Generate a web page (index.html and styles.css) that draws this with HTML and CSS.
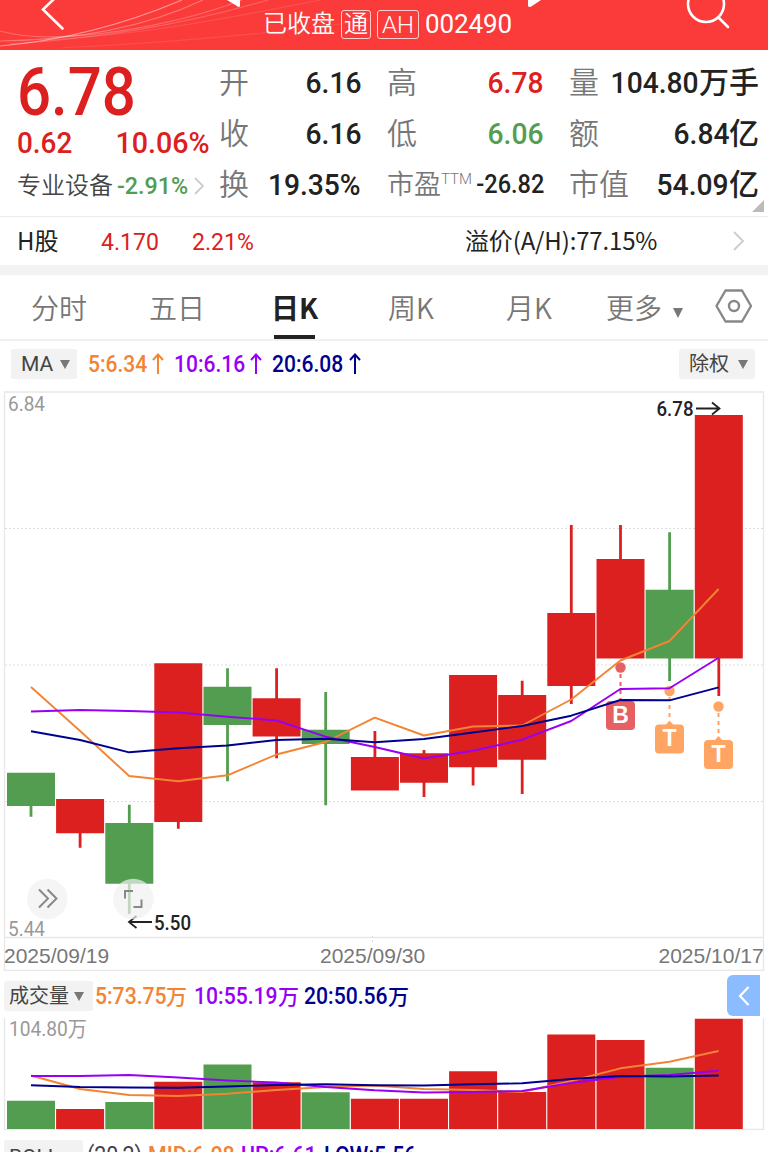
FILE: index.html
```html
<!DOCTYPE html>
<html lang="zh-CN">
<head>
    <meta charset="UTF-8">
    <meta name="viewport" content="width=device-width, initial-scale=1.0">
    <title>002490</title>
    <link rel="stylesheet" href="styles.css">
</head>
<body>
    <header class="header">
        <svg class="header-lines" width="768" height="50" viewBox="0 0 768 50">
            <path d="M0 46 C70 40 130 22 182 0" opacity=".45"/>
            <path d="M0 41 C80 40 150 25 203 0" opacity=".3"/>
            <path d="M0 31 C60 48 180 24 242 0" opacity=".25"/>
            <path d="M10 44 C110 38 200 20 268 0" opacity=".2"/>
            <path d="M40 40 C140 36 240 16 320 0" opacity=".12"/>
            <path d="M60 48 C180 42 270 34 370 20" opacity=".1"/>
        </svg>
        <svg class="header-icons" width="768" height="50" viewBox="0 0 768 50">
            <path class="stroke" d="M54 -1 L43 9.5 L62.500 28.500"/>
            <path class="solid" d="M227 0 H240 V6 Q239 8 237 6 Z M528 0 H541 L532 6 Q529 8 528 6 Z"/>
            <circle class="stroke" cx="706" cy="4" r="18"/>
            <path class="stroke" d="M718.500 17.500 L728 27"/>
        </svg>
        <div class="header-title">
            <span>已收盘</span>
            <span class="tag">通</span>
            <span class="tag">AH</span>
            <span class="code">002490</span>
        </div>
    </header>

    <section class="quote">
        <div class="quote-main">
            <div class="price"><span class="num left">6.78</span></div>
            <div class="change"><span class="num left">0.62</span><span class="num right">10.06%</span></div>
            <div class="sector">
                <span>专业设备</span><span class="num left pct">-2.91%</span>
                <svg width="10" height="18" viewBox="0 0 10 18"><path d="M1 1 L9 9 L1 17"/></svg>
            </div>
        </div>
        <div class="quote-grid">
            <div class="cell"><label>开</label><b><span class="num right">6.16</span></b></div>
            <div class="cell"><label>高</label><b class="up"><span class="num right">6.78</span></b></div>
            <div class="cell"><label>量</label><b><span class="num right">104.80</span>万手</b></div>
            <div class="cell"><label>收</label><b><span class="num right">6.16</span></b></div>
            <div class="cell"><label>低</label><b class="down"><span class="num right">6.06</span></b></div>
            <div class="cell"><label>额</label><b><span class="num right">6.84</span>亿</b></div>
            <div class="cell"><label>换</label><b><span class="num right">19.35%</span></b></div>
            <div class="cell small"><label>市盈<sup>TTM</sup></label><b><span class="num right">-26.82</span></b></div>
            <div class="cell"><label>市值</label><b><span class="num right">54.09</span>亿</b></div>
        </div>
        <span class="corner"></span>
    </section>

    <section class="hstock">
        <span class="hs-name">H股</span>
        <span class="hs-price"><span class="num left">4.170</span></span>
        <span class="hs-pct"><span class="num left">2.21%</span></span>
        <span class="hs-ratio">溢价(A/H):77.15%</span>
        <svg width="12" height="20" viewBox="0 0 12 20"><path d="M1 1 L10 10 L1 19"/></svg>
    </section>

    <nav class="tabs">
        <span class="tab">分时</span>
        <span class="tab">五日</span>
        <span class="tab active">日K</span>
        <span class="tab">周K</span>
        <span class="tab month">月K</span>
        <span class="tab more">更多<i class="arrow"></i></span>
        <svg class="gear" width="40" height="36" viewBox="0 0 40 36">
            <path d="M11.500 2.500 H28 L37 18 L28 33.500 H11.500 L2.500 18 Z"/>
            <circle cx="20" cy="18" r="5"/>
        </svg>
    </nav>

    <section class="legend">
        <span class="chip chip-ma">MA<i class="arrow"></i></span>
        <span class="ma5 w78"><span class="num left">5:6.34</span><svg class="up-arrow" width="12" height="22" viewBox="0 0 12 22"><path d="M6 21 V2 M1 7 L6 1.500 L11 7"/></svg></span>
        <span class="ma10 w88"><span class="num left">10:6.16</span><svg class="up-arrow" width="12" height="22" viewBox="0 0 12 22"><path d="M6 21 V2 M1 7 L6 1.500 L11 7"/></svg></span>
        <span class="ma20 w89"><span class="num left">20:6.08</span><svg class="up-arrow" width="12" height="22" viewBox="0 0 12 22"><path d="M6 21 V2 M1 7 L6 1.500 L11 7"/></svg></span>
        <span class="chip chip-right">除权<i class="arrow"></i></span>
    </section>

    <!-- K线图 -->
    <svg class="chart" width="768" height="580" viewBox="0 391 768 580">
        <g class="frame">
            <path d="M4.500 970.500 V392 H763.500 V970.500 Z"/>
            <path d="M4 937.500 H764"/>
        </g>
        <path class="grid" d="M5 528.500 H763 M5 665 H763 M5 801.500 H763 M372.500 936 V943"/>
        <g class="green">
            <path d="M7 772.700h48v33.300h-48z M29.600 806h2.800v10.700h-2.800z"/>
            <path d="M105.300 823h48v60.700h-48z M127.900 804.700h2.800v109.300h-2.800z"/>
            <path d="M203.500 686.700h48v38.300h-48z M226.100 668.300h2.800v113h-2.800z"/>
            <path d="M301.700 729.700h48v14.300h-48z M324.300 692h2.800v113.300h-2.800z"/>
            <path d="M645.600 589.700h48v68.800h-48z M668.200 532.300h2.800v148.700h-2.800z"/>
        </g>
        <g class="red">
            <path d="M56.100 799h48v34.300h-48z M78.700 833h2.800v14.700h-2.800z"/>
            <path d="M154.300 663.300h48v158.700h-48z M176.900 821h2.800v7.700h-2.800z"/>
            <path d="M252.600 698.300h48v38.200h-48z M275.200 668.300h2.800v90h-2.800z"/>
            <path d="M350.900 757h48v33.500h-48z M373.500 731h2.800v27h-2.800z"/>
            <path d="M400 753.300h48v29.500h-48z M422.600 750h2.800v47h-2.800z"/>
            <path d="M449.100 675h48v92.200h-48z M471.700 767h2.800v18.500h-2.800z"/>
            <path d="M498.200 695h48v64.700h-48z M520.800 680.700h2.800v113.300h-2.800z"/>
            <path d="M547.300 613h48v73h-48z M569.900 525h2.800v179h-2.800z"/>
            <path d="M596.500 559h48v99.600h-48z M619.100 525h2.800v35h-2.800z"/>
            <path d="M694.800 415h48v243.600h-48z M717.400 658h2.800v38h-2.800z"/>
        </g>

        <!-- 买卖点 -->
        <g class="mark-b">
            <circle cx="620.500" cy="667.500" r="5.200"/>
            <path d="M620.500 674 V701"/>
            <rect x="606" y="701" width="29" height="29" rx="4"/>
            <text x="620.500" y="722.500">B</text>
        </g>
        <g class="mark-t">
            <circle cx="669.500" cy="691" r="5.200"/>
            <path d="M669.500 697 V721"/>
            <path class="tip" d="M665.500 725 L669.500 720.500 L673.500 725 Z"/>
            <rect x="655" y="724.500" width="29" height="29" rx="4"/>
            <text x="669.500" y="746">T</text>
        </g>
        <g class="mark-t">
            <circle cx="718.500" cy="706.500" r="5.200"/>
            <path d="M718.500 713 V736"/>
            <path class="tip" d="M714.500 740.500 L718.500 736 L722.500 740.500 Z"/>
            <rect x="704" y="740" width="29" height="29" rx="4"/>
            <text x="718.500" y="761.500">T</text>
        </g>

        <polyline class="line5" points="31,687 80.100,731 129.200,776 178.300,781.300 227.400,775.300 276.500,754.500 325.600,742 374.800,717.700 423.900,735.500 473,726.500 522.100,725.500 571.200,699.500 620.400,660.500 669.500,641 718.600,589"/>
        <polyline class="line10" points="31,711.500 80.100,710 129.200,711 178.300,712.500 227.400,716.700 276.500,720.500 325.600,736.700 374.800,747 423.900,758.500 473,750.700 522.100,739.700 571.200,721 620.400,689 669.500,688.300 718.600,657.700"/>
        <polyline class="line20" points="31,731.300 80.100,740 129.200,752.300 178.300,748.300 227.400,745.500 276.500,740 325.600,738.700 374.800,742.300 423.900,739 473,732.500 522.100,726 571.200,715.700 620.400,700 669.500,700.300 718.600,687.300"/>

        <g class="axis">
            <text x="8" y="410.500" textLength="37" lengthAdjust="spacingAndGlyphs">6.84</text>
            <text x="8" y="936" textLength="37" lengthAdjust="spacingAndGlyphs">5.44</text>
        </g>
        <g class="tip-text">
            <text x="656.500" y="416" textLength="37" lengthAdjust="spacingAndGlyphs">6.78</text>
            <path d="M696 408.500 H719 M712 402.500 L719.500 408.500 L712 414.500"/>
            <text x="154" y="929.500" textLength="37" lengthAdjust="spacingAndGlyphs">5.50</text>
            <path d="M152 922 H129 M136.500 916 L129 922 L136.500 928"/>
        </g>
        <g class="date">
            <text x="4" y="963">2025/09/19</text>
            <text x="320" y="963">2025/09/30</text>
            <text x="658.500" y="963">2025/10/17</text>
        </g>

        <g class="tool">
            <circle cx="47.300" cy="899" r="20.300"/>
            <path d="M39 889.500 L48 898.500 L39 907.500 M47.500 889.500 L56.500 898.500 L47.500 907.500"/>
            <circle cx="133.300" cy="899" r="20.300"/>
            <path d="M125 898.500 V891 H133 M141.500 899.500 V907 H133.500"/>
        </g>
    </svg>

    <section class="vol-legend">
        <span class="chip chip-vol">成交量<i class="arrow"></i></span>
        <span class="ma5 v5"><span class="num left">5:73.75</span>万</span>
        <span class="ma10 v10"><span class="num left">10:55.19</span>万</span>
        <span class="ma20 v20"><span class="num left">20:50.56</span>万</span>
        <span class="fold"><svg width="12" height="20" viewBox="0 0 12 20"><path d="M10.500 1 L2 10 L10.500 19"/></svg></span>
    </section>

    <!-- 成交量 -->
    <svg class="chart" width="768" height="113" viewBox="0 1017 768 113">
        <path class="frame" d="M4.500 1018 V1129.500 H763.500 V1018"/>
        <g class="green">
            <path d="M7 1100.800h48v28.200h-48z M105.300 1102h48v27h-48z M203.500 1064.500h48v64.500h-48z M301.700 1092.300h48v36.700h-48z M645.600 1067.800h48v61.200h-48z"/>
        </g>
        <g class="red">
            <path d="M56.100 1109h48v20h-48z M154.300 1081.700h48v47.300h-48z M252.600 1082.300h48v46.700h-48z M350.900 1098.700h48v30.300h-48z M400 1098.700h48v30.300h-48z"/>
            <path d="M449.100 1071.300h48v57.700h-48z M498.200 1092h48v37h-48z M547.300 1034.500h48v94.500h-48z M596.500 1040h48v89h-48z M694.800 1018.800h48v110.200h-48z"/>
        </g>
        <polyline class="line5" points="31,1075.500 80.100,1089 129.200,1095 178.300,1096 227.400,1093.700 276.500,1090 325.600,1087 374.800,1085.500 423.900,1089 473,1090 522.100,1092 571.200,1081 620.400,1068.300 669.500,1061.700 718.600,1051"/>
        <polyline class="line10" points="31,1076 80.100,1076 129.200,1075 178.300,1077.500 227.400,1080.500 276.500,1082.500 325.600,1087 374.800,1090.300 423.900,1092.500 473,1092 522.100,1091 571.200,1083 620.400,1076.700 669.500,1075 718.600,1070.700"/>
        <polyline class="line20" points="31,1085.300 80.100,1087 129.200,1087.500 178.300,1087.700 227.400,1086.500 276.500,1085 325.600,1084.300 374.800,1085.300 423.900,1085.500 473,1084.300 522.100,1083.300 571.200,1079 620.400,1076 669.500,1076.500 718.600,1075.500"/>
        <g class="axis">
            <text x="9" y="1036" textLength="78" lengthAdjust="spacingAndGlyphs">104.80万</text>
        </g>
    </svg>

    <section class="boll">
        <span class="chip chip-boll">BOLL<i class="arrow"></i></span>
        <span class="param"><span class="num left">(20,2)</span></span>
        <span class="ma5 b1"><span class="num left">MID:6.08</span></span>
        <span class="ma10 b2"><span class="num left">UP:6.61</span></span>
        <span class="ma20 b3"><span class="num left">LOW:5.56</span></span>
    </section>
</body>
</html>
```

FILE: styles.css
```css
* { margin: 0; padding: 0; box-sizing: border-box; }
html, body { height: 1152px; overflow: hidden; }
body { width: 768px; background: #fff; color: #222; font-family: Roboto, "Noto Sans CJK SC", sans-serif; }
svg { display: block; flex: none; }
section, nav { white-space: nowrap; }

.num { display: inline-block; font-family: Roboto, sans-serif; }
.left { transform: scaleX(.93); transform-origin: left; }
.right { transform: scaleX(.94); transform-origin: right; }
.up { color: #dc2020; }
.down { color: #529d4f; }
.arrow { display: inline-block; border: 5.5px solid transparent; border-top: 10px solid #777; border-bottom: 0; }

.header { position: relative; height: 50px; background: #fb3a3a; color: #fff; overflow: hidden; }
.header-lines, .header-icons { position: absolute; left: 0; top: 0; }
.header-lines path { fill: none; stroke: #fff; stroke-width: 1.2; }
.stroke { fill: none; stroke: #fff; stroke-width: 2.6; stroke-linecap: round; }
.solid { fill: #fff; }
.header-title { position: relative; display: flex; align-items: center; gap: 6px; padding: 9px 0 0 263px; height: 39px; font-size: 24px; font-weight: 350; line-height: 26px; }
.tag { border: 1.5px solid rgba(255,255,255,.75); border-radius: 3px; height: 29px; line-height: 26px; padding: 0 2px; }
.tag + .tag { padding: 0 4px; line-height: 28px; font-weight: 300; }
.code { font-size: 26px; font-weight: 400; letter-spacing: -.1px; }

.quote { position: relative; display: flex; height: 167px; border-bottom: 1px solid #ebebeb; }
.quote-main { width: 219px; padding-left: 17px; color: #dc2020; }
.price { height: 69px; padding-top: 4px; line-height: 76px; font-size: 67px; font-weight: 500; }
.price .num { transform: scaleX(.895); line-height: 60px; }
.change { display: flex; justify-content: space-between; height: 48px; padding-right: 9px; line-height: 47px; font-size: 30px; font-weight: 500; }
.change .right { transform: scaleX(.955); }
.sector { display: flex; align-items: center; height: 37px; line-height: 34px; color: #444; font-size: 24px; font-weight: 350; }
.sector .pct { width: 84px; margin-right: -3px; color: #529d4f; font-weight: 500; padding-left: 4px; transform: scaleX(.97); }
.sector svg path, .hstock svg path { fill: none; stroke: #ccc; stroke-width: 1.8; }
.quote-grid { display: grid; grid-template-columns: 142px 156px 190px; grid-auto-rows: 51px; column-gap: 26px; padding-top: 7px; }
.cell { display: flex; justify-content: space-between; align-items: center; line-height: 50px; }
.cell label { font-size: 30px; font-weight: 350; color: #777; }
.cell b { font-size: 30px; font-weight: 500; }
.cell.small label { font-size: 27px; }
.cell.small b { font-size: 25px; }
.cell sup { display: inline-block; font-size: 15px; line-height: 1; vertical-align: 10px; }
.corner { position: absolute; right: 4px; bottom: 4px; border: 6px solid #bbb; border-left-color: transparent; border-top-color: transparent; }

.hstock { display: flex; align-items: center; height: 58px; border-bottom: 10px solid #f2f2f2; padding-left: 17px; font-size: 24px; line-height: 24px; font-family: "Noto Sans CJK SC", sans-serif; }
.hstock > span { height: 26px; }
.hs-name { width: 84px; }
.hs-price { width: 91px; color: #dc2020; }
.hs-price .num, .hs-pct .num { transform: scaleX(.96); }
.hs-pct { width: 273px; color: #dc2020; }
.hs-ratio { width: 268px; letter-spacing: -.15px; }

.tabs { display: flex; height: 66px; border-bottom: 2px solid #eff0f3; color: #777; font-size: 28px; font-weight: 350; line-height: 65px; padding-left: 31px; font-family: "Noto Sans CJK SC", sans-serif; }
.tab { width: 118px; }
.tab.active { width: 121px; padding-left: 4px; position: relative; color: #222; font-weight: 700; }
.tab.active::after { content: ""; position: absolute; left: 7px; bottom: 0; width: 41px; height: 4px; background: #222; }
.tab.month { width: 100px; }
.tab.more { width: 108px; }
.more .arrow { margin-left: 11px; vertical-align: 1px; }
.gear { margin-top: 13px; }
.gear path, .gear circle { fill: none; stroke: #888; stroke-width: 2.4; stroke-linejoin: round; }

.chip { display: flex; align-items: center; justify-content: space-between; height: 30px; background: #f2f2f2; border-radius: 3px; color: #444; font-size: 21px; font-weight: 400; }
.chip .arrow { border-width: 9px 5px 0; }
.legend, .vol-legend, .boll { display: flex; font-size: 23px; font-weight: 500; line-height: 32px; }
.legend { height: 50px; padding: 8px 13px 0 11px; }
.chip-ma { width: 66px; padding: 0 7px 0 10px; margin-right: 11px; }
.chip-right { width: 76px; padding: 0 7px 0 10px; margin-left: auto; font-size: 20px; }
.legend > span:not(.chip) { display: flex; justify-content: space-between; margin-right: 10px; }
.legend .num { width: 62px; transform: scaleX(.915); }
.w78 { width: 76px; }
.w88 { width: 88px; }
.w89 { width: 89px; }
.up-arrow { margin-top: 4px; fill: none; stroke: currentColor; stroke-width: 2; }
.ma5 { color: #f28434; }
.ma10 { color: #9800f5; }
.ma20 { color: #00008f; }

.frame, .frame path { fill: none; stroke: #e8e8e8; stroke-width: 1.4; }
.grid { fill: none; stroke: #ddd; stroke-width: 1; stroke-dasharray: 2 2; }
.green { fill: #529d4f; }
.red { fill: #dc2020; }
.line5, .line10, .line20 { fill: none; stroke-width: 1.9; stroke-linejoin: round; }
.line5 { stroke: #f28434; }
.line10 { stroke: #9800f5; }
.line20 { stroke: #00008f; }
.axis { fill: #999; font-size: 21px; }
.tip-text { fill: #222; font-size: 21px; font-weight: 500; }
.tip-text path { fill: none; stroke: #222; stroke-width: 1.8; }
.date { fill: #777; font-family: "Liberation Sans", sans-serif; font-size: 21px; }
.mark-b { fill: #e66063; stroke: #e66063; }
.mark-t { fill: #ffa564; stroke: #ffa564; }
.mark-b path, .mark-t path { stroke-width: 2; stroke-dasharray: 4 4; }
.mark-t .tip, .mark-b circle, .mark-t circle, .mark-b rect, .mark-t rect { stroke: none; }
.mark-b text, .mark-t text { fill: #fff; stroke: none; font-family: "Liberation Sans", sans-serif; font-size: 23px; font-weight: 700; text-anchor: middle; }
.tool circle { fill: #f1f1f1; fill-opacity: .7; }
.tool path { fill: none; stroke: #888; stroke-width: 2; }

.vol-legend { height: 46px; padding: 10px 0 0 4px; }
.chip-vol { width: 89px; padding: 0 9px 0 5px; margin-right: 2px; font-size: 20px; }
.v5 { width: 99px; }
.v10 { width: 110px; }
.v20 { width: 110px; }
.vol-legend > span:not(.chip) { display: flex; font-size: 21px; }
.vol-legend .num { font-size: 23px; transform: scaleX(.92); }
.v5 .num { width: 71px; }
.v10 .num, .v20 .num { width: 84px; }
.vol-legend .fold { margin: -6px 8px 0 auto; width: 33px; height: 41px; background: #8abcff; border-radius: 6px 0 0 6px; align-items: center; justify-content: center; }
.fold path { fill: none; stroke: #fff; stroke-width: 2.2; }

.boll { padding: 10px 0 0 4px; }
.chip-boll { width: 79px; padding: 3px 8px 0 5px; margin-right: 4px; }
.param { width: 61px; color: #444; font-weight: 400; }
.b1 { width: 93px; }
.b2 { width: 83px; }
```
